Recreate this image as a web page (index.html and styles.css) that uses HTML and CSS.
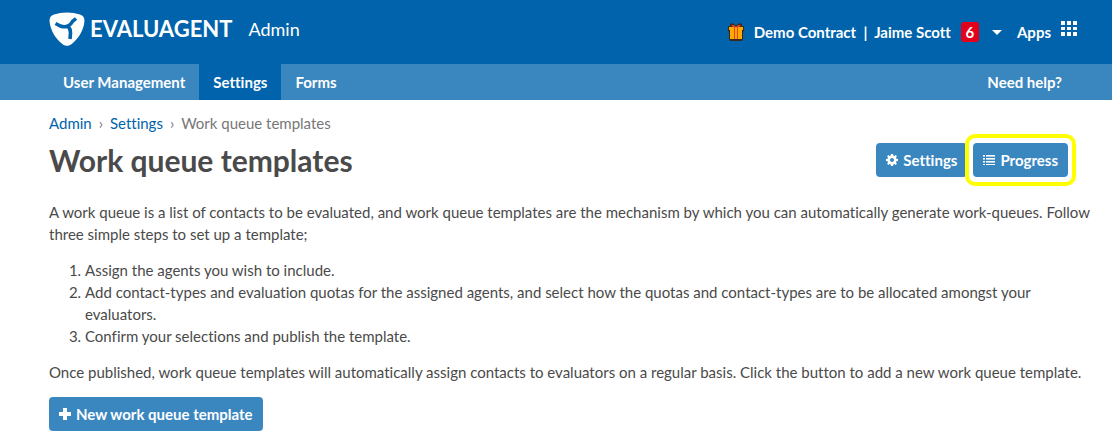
FILE: index.html
```html
<!DOCTYPE html>
<html lang="en">
<head>
    <meta charset="UTF-8">
    <meta name="viewport" content="width=device-width, initial-scale=1.0">
    <title>Work queue templates</title>
    <link rel="stylesheet" href="styles.css">
</head>
<body>
    <header class="header">
        <a href="#" class="brand">
            <svg class="brand-icon" viewBox="0 0 36 34" aria-hidden="true">
                <path fill="#fff" d="M5 2.500C13-.3 23-.3 31 2.500C34.500 3.700 35.700 6 35.400 9.500C34.600 18 30 26 23 31.700C19.500 34.400 16.500 34.400 13 31.700C6 26 1.400 18 .6 9.500C.3 6 1.500 3.700 5 2.500Z"/>
                <path fill="none" stroke="#0063ab" stroke-width="3.600" d="M6.500 11.500L11.500 14Q15.500 15.500 19 14Q22 12.500 23.500 9.500L27 6.500M19 14Q21.500 17 21.500 21L21 27"/>
            </svg>
            <span class="brand-name">EVALUAGENT</span>
            <span class="brand-section">Admin</span>
        </a>
        <div class="account">
            <svg class="gift" viewBox="0 0 16 18" aria-hidden="true">
                <path fill="#3a2a1c" d="M2 1Q4-.5 6 1L8 2.500L10 1Q12-.5 14 1V3H15Q16 3 16 4V8L15 9V16Q15 18 13 18H3Q1 18 1 16V9L0 8V4Q0 3 1 3H2Z"/>
                <path fill="#ffa800" d="M1 4H15V7H1ZM2 7H14V16H2Z"/>
                <path fill="#e8401c" d="M6 4H7V16H6ZM9 4H10V16H9ZM3 2H6L8 4H5ZM10 2H13L11 4H8Z"/>
            </svg>
            <a href="#">Demo Contract&nbsp; |&nbsp; Jaime Scott</a>
            <span class="badge">6</span>
            <button type="button" class="caret" aria-label="Account menu">
                <svg viewBox="0 0 10 5"><path fill="#fff" d="M0 0H10L5 5Z"/></svg>
            </button>
            <a href="#" class="apps">Apps
                <svg viewBox="0 0 16 15" aria-hidden="true">
                    <path fill="#fff" d="M0 0h4v4H0zM6 0h4v4H6zM12 0h4v4h-4zM0 6h4v3H0zM6 6h4v3H6zM12 6h4v3h-4zM0 11h4v4H0zM6 11h4v4H6zM12 11h4v4h-4z"/>
                </svg>
            </a>
        </div>
    </header>

    <nav class="nav">
        <a href="#">User Management</a>
        <a href="#" class="active">Settings</a>
        <a href="#">Forms</a>
        <a href="#" class="help">Need help?</a>
    </nav>

    <main class="content">
        <div class="breadcrumb">
            <a href="#">Admin</a>
            <span>›</span>
            <a href="#">Settings</a>
            <span>›</span>
            <span>Work queue templates</span>
        </div>

        <div class="title-row">
            <h1>Work queue templates</h1>
            <div class="actions">
                <button type="button" class="btn">
                    <svg class="btn-icon" viewBox="0 0 12 12" aria-hidden="true">
                        <path fill="#fff" fill-rule="evenodd" d="M5 0H7L7.300 1.600L8.400 2L9.700 1.100L10.900 2.300L10 3.600L10.400 4.700L12 5V7L10.400 7.300L10 8.400L10.900 9.700L9.700 10.900L8.400 10L7.300 10.400L7 12H5L4.700 10.400L3.600 10L2.300 10.900L1.100 9.700L2 8.400L1.600 7.300L0 7V5L1.600 4.700L2 3.600L1.100 2.300L2.300 1.100L3.600 2L4.700 1.600ZM6 4A2 2 0 1 0 6 8A2 2 0 1 0 6 4Z"/>
                    </svg>
                    Settings
                </button>
                <div class="highlight">
                    <button type="button" class="btn">
                        <svg class="btn-icon" viewBox="0 0 12 12" aria-hidden="true">
                            <path fill="#fff" d="M0 1h2v1H0zM3 1h9v1H3zM0 4h2v1H0zM3 4h9v1H3zM0 7h2v1H0zM3 7h9v1H3zM0 10h2v1H0zM3 10h9v1H3z"/>
                            <path fill="#fff" opacity=".6" d="M0 2h2v1H0zM3 2h9v1H3zM0 5h2v1H0zM3 5h9v1H3zM0 8h2v1H0zM3 8h9v1H3z"/>
                        </svg>
                        Progress
                    </button>
                </div>
            </div>
        </div>

        <p>A work queue is a list of contacts to be evaluated, and work queue templates are the mechanism by which you can automatically generate work-queues. Follow three simple steps to set up a template;</p>
        <ol>
            <li>Assign the agents you wish to include.</li>
            <li>Add contact-types and evaluation quotas for the assigned agents, and select how the quotas and contact-types are to be allocated amongst your evaluators.</li>
            <li>Confirm your selections and publish the template.</li>
        </ol>
        <p>Once published, work queue templates will automatically assign contacts to evaluators on a regular basis. Click the button to add a new work queue template.</p>

        <button type="button" class="btn">
            <svg class="btn-icon" viewBox="0 0 12 12" aria-hidden="true">
                <path fill="#fff" d="M4 0H8V4H12V8H8V12H4V8H0V4H4Z"/>
            </svg>
            New work queue template
        </button>
    </main>
</body>
</html>
```

FILE: styles.css
```css
* {
    box-sizing: border-box;
}
body {
    margin: 0;
    font-family: Lato, "Liberation Sans", sans-serif;
    font-size: 15px;
    line-height: 22px;
    font-variant-ligatures: none;
    color: #4a4a4a;
    background-color: #fff;
}
a {
    color: #0063ab;
    text-decoration: none;
}
.header {
    display: flex;
    justify-content: space-between;
    align-items: center;
    height: 64px;
    padding: 0 35px 0 49px;
    background-color: #0063ab;
}
.brand {
    display: flex;
    align-items: center;
    color: #fff;
    padding-bottom: 7px;
}
.brand-icon {
    width: 36px;
    height: 34px;
    margin-right: 5px;
}
.brand-name {
    font-size: 22px;
    font-weight: bold;
}
.brand-section {
    font-size: 18px;
    margin-left: 16px;
}
.account {
    display: flex;
    align-items: center;
    font-weight: bold;
}
.account a {
    color: #fff;
}
.gift {
    width: 16px;
    height: 18px;
    margin-right: 10px;
}
.badge {
    width: 18px;
    line-height: 20px;
    margin-left: 10px;
    text-align: center;
    color: #fff;
    background-color: #e2001a;
    border-radius: 3px;
}
.caret {
    display: flex;
    margin: 0 15px 0 13px;
    padding: 0;
    border: 0;
    background: none;
}
.caret svg {
    width: 10px;
    height: 5px;
}
.apps {
    display: flex;
    gap: 10px;
}
.apps svg {
    width: 16px;
    height: 15px;
}
.nav {
    display: flex;
    padding: 0 36px 0 49px;
    background-color: #3a87bf;
}
.nav a {
    padding: 7px 14px;
    font-weight: bold;
    color: #fff;
}
.nav .active {
    background-color: #0063ab;
}
.nav .help {
    margin-left: auto;
}
.content {
    padding: 12px 20px 16px 49px;
}
.breadcrumb {
    display: flex;
    gap: 7px;
    color: #777;
}
.title-row {
    display: flex;
    justify-content: space-between;
    align-items: center;
    margin-bottom: 15px;
    padding-right: 16px;
}
h1 {
    margin: 0;
    font-size: 30px;
    line-height: 40px;
}
.actions {
    display: flex;
    align-items: center;
}
.highlight {
    margin-left: -2px;
    padding: 5px 4px;
    border: 4px solid #ff0;
    border-radius: 10px;
}
p,
ol {
    margin: 0 0 14px;
}
ol {
    padding-left: 36px;
}
.btn {
    display: inline-flex;
    align-items: center;
    gap: 5px;
    padding: 6px 10px;
    border: 0;
    border-radius: 4px;
    font: bold 15px/22px Lato, "Liberation Sans", sans-serif;
    font-variant-ligatures: none;
    color: #fff;
    background-color: #3a87bf;
    cursor: pointer;
}
.btn-icon {
    width: 12px;
    height: 12px;
}
```
